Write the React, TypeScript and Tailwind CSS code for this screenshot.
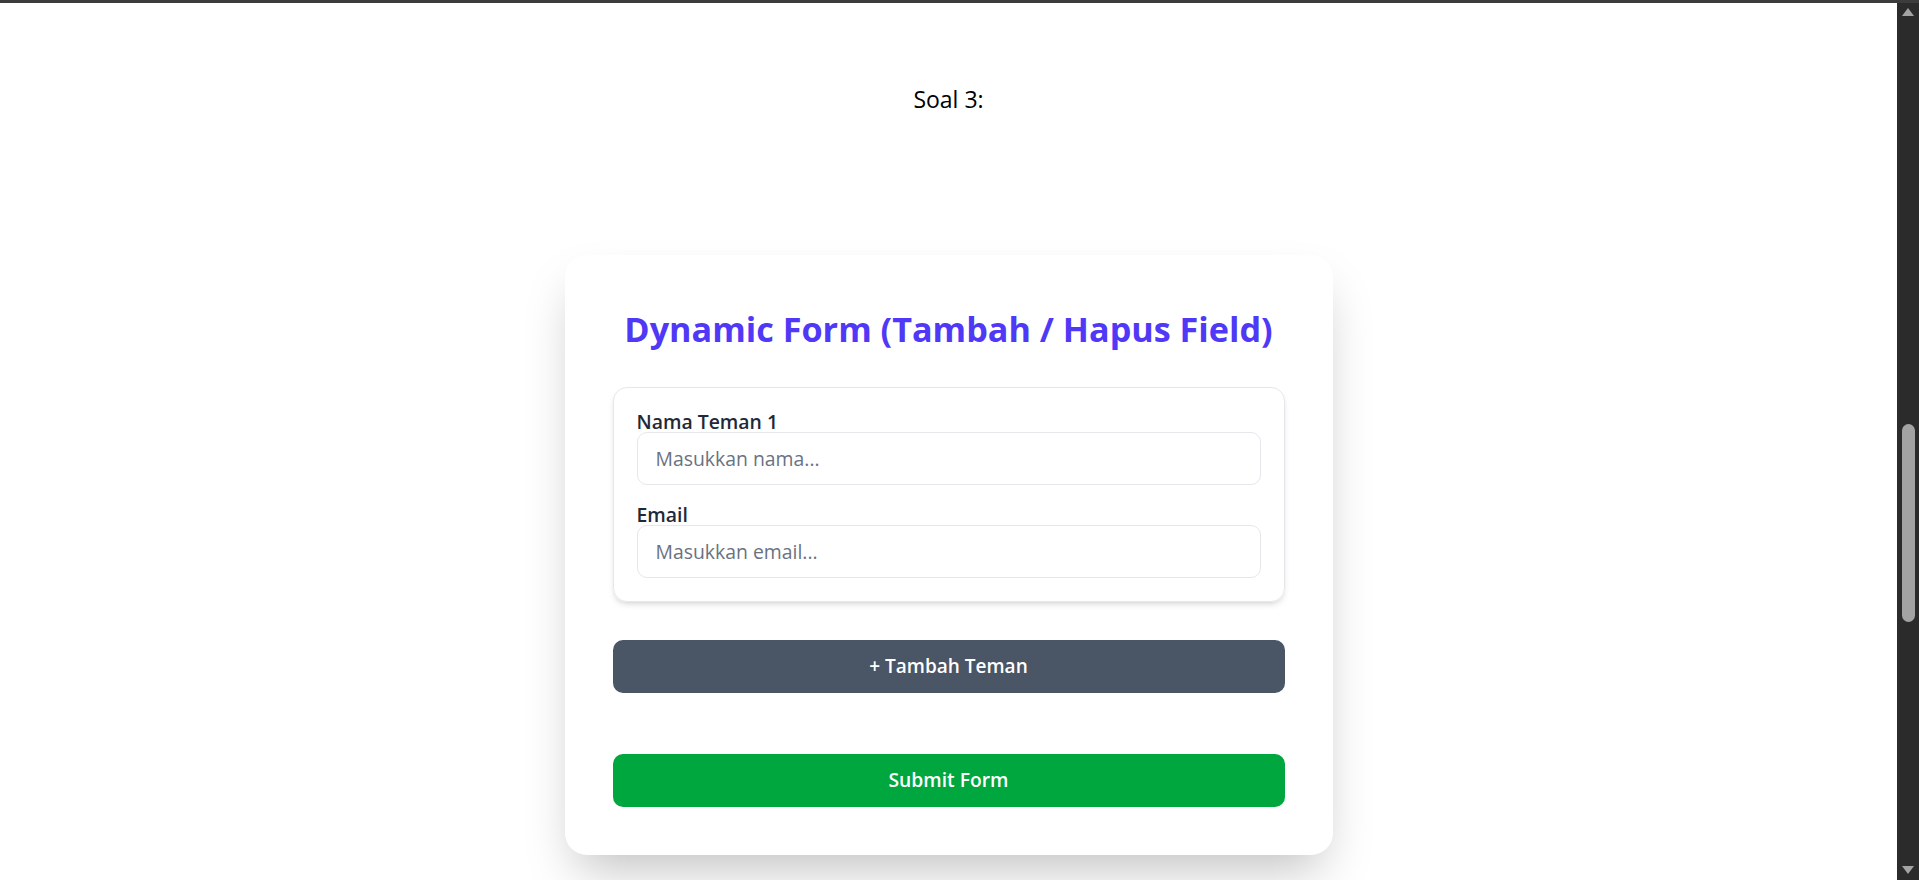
import { useState } from 'react'

interface Teman {
  id: number
  nama: string
  email: string
}

function Scrollbar() {
  return (
    <div className="w-[22px] shrink-0 bg-[#2b2b2b] flex flex-col items-center">
      <svg className="mt-[5px]" width="12" height="8" viewBox="0 0 12 8">
        <path d="M6 0 L12 8 L0 8 Z" fill="#a3a3a3" />
      </svg>
      <div className="mt-[408px] w-[13px] h-[198px] rounded-full bg-[#a3a3a3]" />
      <div className="flex-1" />
      <svg className="mb-[6px]" width="12" height="8" viewBox="0 0 12 8">
        <path d="M0 0 L12 0 L6 8 Z" fill="#a3a3a3" />
      </svg>
    </div>
  )
}

export default function App() {
  const [teman, setTeman] = useState<Teman[]>([{ id: 1, nama: '', email: '' }])

  const tambah = () => setTeman([...teman, { id: Date.now(), nama: '', email: '' }])
  const hapus = (id: number) => setTeman(teman.filter((t) => t.id !== id))
  const ubah = (id: number, key: 'nama' | 'email', value: string) =>
    setTeman(teman.map((t) => (t.id === id ? { ...t, [key]: value } : t)))

  return (
    <div className="h-[880px] flex flex-col overflow-hidden bg-white font-['Open_Sans','Noto_Sans',sans-serif]">
      <div className="h-[3px] shrink-0 bg-[#3c3c3c]" />
      <div className="flex flex-1 min-h-0">
        <main className="flex-1 flex flex-col items-center overflow-hidden">
          <p className="mt-[80px] text-[23px] leading-[32px] text-black">Soal 3:</p>

          <form
            onSubmit={(e) => e.preventDefault()}
            className="mt-[140px] w-[768px] shrink-0 rounded-[22px] bg-white p-[48px] shadow-2xl"
          >
            <h2 className="pt-[4px] text-center text-[34.2px] leading-[43px] font-bold text-indigo-600">
              Dynamic Form (Tambah / Hapus Field)
            </h2>

            <div className="mt-[37px] flex flex-col gap-[38px]">
              {teman.map((t, i) => (
                <div
                  key={t.id}
                  className="rounded-[14px] border border-gray-200 p-[23px] shadow-md"
                >
                  <label className="block text-[19.4px] leading-[21px] font-semibold text-gray-800">
                    Nama Teman {i + 1}
                  </label>
                  <input
                    value={t.nama}
                    onChange={(e) => ubah(t.id, 'nama', e.target.value)}
                    placeholder="Masukkan nama..."
                    className="block w-full h-[53px] rounded-[10px] border border-gray-200 px-[18px] text-[19.4px] text-gray-800 placeholder:text-gray-500 outline-none"
                  />
                  <label className="mt-[19px] block text-[19.4px] leading-[21px] font-semibold text-gray-800">
                    Email
                  </label>
                  <input
                    value={t.email}
                    onChange={(e) => ubah(t.id, 'email', e.target.value)}
                    placeholder="Masukkan email..."
                    className="block w-full h-[53px] rounded-[10px] border border-gray-200 px-[18px] text-[19.4px] text-gray-800 placeholder:text-gray-500 outline-none"
                  />
                  {teman.length > 1 && (
                    <button
                      type="button"
                      onClick={() => hapus(t.id)}
                      className="mt-[19px] h-[44px] w-full rounded-[10px] bg-red-500 text-[18px] font-semibold text-white"
                    >
                      Hapus
                    </button>
                  )}
                </div>
              ))}
            </div>

            <button
              type="button"
              onClick={tambah}
              className="mt-[38px] h-[53px] w-full rounded-[10px] bg-gray-600 text-[19px] font-semibold text-white"
            >
              + Tambah Teman
            </button>

            <button
              type="submit"
              className="mt-[61px] h-[53px] w-full rounded-[10px] bg-green-600 text-[19.3px] font-semibold text-white"
            >
              Submit Form
            </button>
          </form>
        </main>
        <Scrollbar />
      </div>
    </div>
  )
}
